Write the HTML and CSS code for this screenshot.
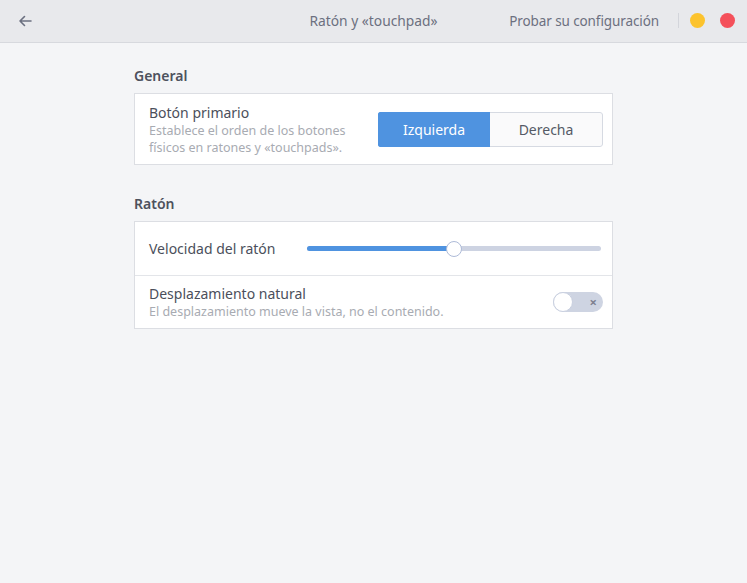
FILE: index.html
```html
<!DOCTYPE html>
<html lang="es">
<head>
<meta charset="utf-8">
<title>Ratón y «touchpad»</title>
<link rel="stylesheet" href="styles.css">
</head>
<body>
<div class="window">
  <header class="titlebar">
    <button class="back" aria-label="Atrás">
      <svg width="14" height="12" viewBox="0 0 14 12"><path d="M13 6H2M6.5 1.5L2 6l4.5 4.5" fill="none" stroke="#6b7080" stroke-width="1.6" stroke-linecap="round" stroke-linejoin="round"/></svg>
    </button>
    <div class="title">Ratón y «touchpad»</div>
    <div class="actions">
      <span class="test">Probar su configuración</span>
      <span class="sep"></span>
      <span class="dot yellow"></span>
      <span class="dot red"></span>
    </div>
  </header>
  <main class="content">
    <section class="group">
      <h2 class="group-title">General</h2>
      <div class="card">
        <div class="row row-tall">
          <div class="labels">
            <div class="label">Botón primario</div>
            <div class="desc">Establece el orden de los botones<br>físicos en ratones y «touchpads».</div>
          </div>
          <div class="segmented">
            <button class="seg active">Izquierda</button>
            <button class="seg">Derecha</button>
          </div>
        </div>
      </div>
    </section>
    <section class="group">
      <h2 class="group-title">Ratón</h2>
      <div class="card">
        <div class="row row-slider">
          <div class="label">Velocidad del ratón</div>
          <div class="slider">
            <div class="fill" style="width: 50%"></div>
            <div class="thumb" style="left: 50%"></div>
          </div>
        </div>
        <div class="row row-switch">
          <div class="labels">
            <div class="label">Desplazamiento natural</div>
            <div class="desc">El desplazamiento mueve la vista, no el contenido.</div>
          </div>
          <div class="switch">
            <span class="knob"></span>
            <span class="x">×</span>
          </div>
        </div>
      </div>
    </section>
  </main>
</div>
</body>
</html>
```
FILE: styles.css
```css
* { box-sizing: border-box; }
html, body { margin: 0; padding: 0; }
body {
  width: 747px;
  height: 583px;
  overflow: hidden;
  font-family: "Noto Sans", "Open Sans", sans-serif;
  background: #f4f5f7;
}
.window { height: 583px; display: flex; flex-direction: column; }
.titlebar {
  height: 43px;
  flex: none;
  background: #e8e9ec;
  border-bottom: 1px solid #d7d9de;
  display: flex;
  align-items: center;
  position: relative;
  padding: 0 0 1px 0;
}
.back {
  border: 0; background: none; padding: 0;
  margin-left: 18px;
  width: 14px; height: 12px;
  display: flex;
}
.title {
  position: absolute;
  left: 0; right: 0;
  text-align: center;
  font-size: 13.8px;
  color: #6c7080;
  pointer-events: none;
}
.actions {
  margin-left: auto;
  display: flex;
  align-items: center;
  padding-right: 12px;
}
.test { font-size: 13.5px; color: #6c7080; margin-right: 19px; letter-spacing: -0.1px; }
.sep { width: 1px; height: 15px; background: #d3d5db; margin-right: 11px; }
.dot { width: 15px; height: 15px; border-radius: 50%; }
.yellow { background: #fcc32d; margin-right: 15px; }
.red { background: #f4505a; }

.content {
  width: 479px;
  margin-left: 134px;
  padding-top: 23px;
}
.group { margin-bottom: 29px; }
.group-title {
  margin: 0 0 7px 0;
  font-size: 14px;
  font-weight: 600;
  color: #4d515d;
  line-height: 20px;
}
.card {
  background: #fff;
  border: 1px solid #dcdee3;
}
.row {
  display: flex;
  align-items: center;
  padding: 0 9px 0 14px;
}
.row + .row { border-top: 1px solid #e3e5e9; }
.row-tall { height: 70px; }
.row-slider { height: 53px; }
.row-switch { height: 53px; }
.labels { display: flex; flex-direction: column; }
.label { font-size: 14px; color: #4b4f5b; line-height: 19px; }
.desc { font-size: 12.5px; color: #a8abb2; line-height: 17px; }
.segmented {
  margin-left: auto;
  display: flex;
  height: 35px;
  border-radius: 3px;
  overflow: hidden;
}
.seg {
  font-family: inherit;
  font-size: 14px;
  width: 113px;
  border: 1px solid #d6dae2;
  background: #fafafb;
  color: #555a66;
  padding: 0;
}
.seg + .seg { border-left: 0; border-radius: 0 3px 3px 0; }
.seg.active {
  background: #4f93e0;
  border-color: #4f93e0;
  color: #fff;
  width: 112px;
}
.slider {
  margin-left: auto;
  margin-right: 2px;
  width: 294px;
  height: 5px;
  border-radius: 3px;
  background: #cdd3e2;
  position: relative;
}
.fill {
  position: absolute; left: 0; top: 0; bottom: 0;
  background: #4f93e0;
  border-radius: 3px;
}
.thumb {
  position: absolute;
  top: 50%;
  width: 16px; height: 16px;
  margin-left: -8px;
  margin-top: -8px;
  border-radius: 50%;
  background: #fff;
  border: 1px solid #aebbd8;
}
.switch {
  margin-left: auto;
  width: 50px;
  height: 20px;
  border-radius: 10px;
  background: #ced4e2;
  position: relative;
  display: flex;
  align-items: center;
}
.knob {
  position: absolute;
  left: 0; top: 0;
  width: 20px; height: 20px;
  border-radius: 50%;
  background: #fff;
  border: 1px solid #c9d0e0;
}
.x {
  margin-left: auto;
  margin-right: 6px;
  font-size: 13px;
  line-height: 1;
  color: #7d8190;
  font-weight: 700;
}
```
